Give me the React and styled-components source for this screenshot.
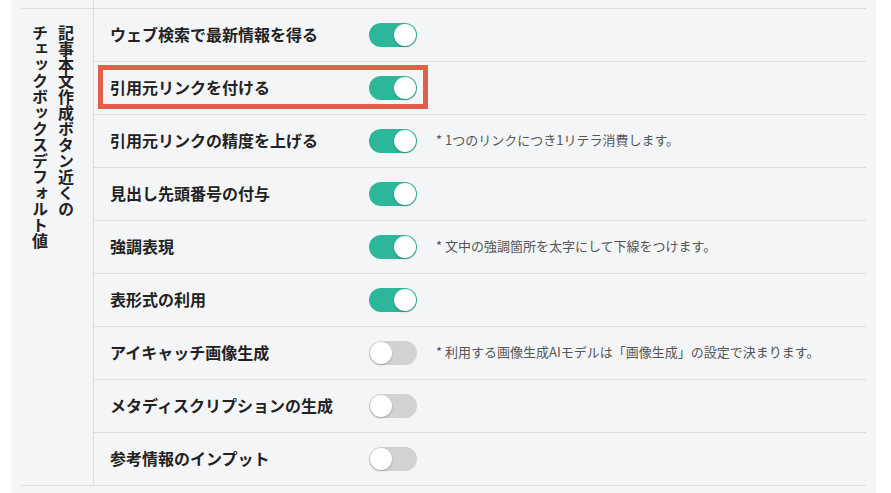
import React from 'react'
import styled, { createGlobalStyle } from 'styled-components'

const GlobalStyle = createGlobalStyle`
  body {
    margin: 0;
    background: #fff;
    font-family: "Noto Sans CJK JP", "Noto Sans", sans-serif;
    color: #222;
  }
`

/** 設定パネル */
const Panel = styled.div`
  margin-left: 11px;
  width: 865px;
  min-height: 493px;
  box-sizing: border-box;
  padding: 0 10px;
  background: #f4f5f7;
`

const Group = styled.div`
  display: grid;
  grid-template-columns: 72px 1fr;
  border-bottom: ${p => (p.$stub ? 'none' : '1px solid #dcdddf')};
  height: ${p => (p.$stub ? '8px' : 'auto')};
  & + & {
    border-top: 1px solid #dcdddf;
  }
`

const HeadCell = styled.div`
  display: flex;
  justify-content: flex-end;
  box-sizing: border-box;
  padding: 16px 14px 0 0;
`

const VerticalText = styled.div`
  writing-mode: vertical-rl;
  font-size: 16px;
  font-weight: bold;
  line-height: 26px;
  color: #222;
`

const Rows = styled.div`
  border-left: 1px solid #dcdddf;
`

const Row = styled.div`
  display: flex;
  align-items: center;
  height: 52px;
  padding-left: 16px;
  & + & {
    border-top: 1px solid #dcdddf;
  }
`

const Field = styled.div`
  position: relative;
  display: flex;
  align-items: center;
  align-self: stretch;
  &::after {
    content: '';
    display: ${p => (p.$highlight ? 'block' : 'none')};
    position: absolute;
    left: -12px;
    right: -11px;
    top: 3px;
    height: 44px;
    box-sizing: border-box;
    border: 5px solid #e35d4b;
  }
`

const Label = styled.span`
  width: 259px;
  margin-top: -3px;
  font-size: 16px;
  line-height: 20px;
  font-weight: bold;
  color: #222;
`

const Track = styled.span`
  position: relative;
  display: inline-block;
  width: 48px;
  height: 24px;
  border-radius: 12px;
  background: ${p => (p.$on ? '#2cb69a' : '#d2d2d2')};
`

const Knob = styled.span`
  position: absolute;
  top: 1px;
  left: ${p => (p.$on ? '25px' : '1px')};
  width: 22px;
  height: 22px;
  border-radius: 50%;
  background: #fff;
  box-shadow: 0 1px 2px rgba(0, 0, 0, 0.25);
`

const Note = styled.span`
  margin-left: 19px;
  margin-top: -3px;
  font-size: 13px;
  line-height: 18px;
  color: #555;
`

const Toggle = ({ on }) => (
  <Track $on={on}>
    <Knob $on={on} />
  </Track>
)

const settings = [
  { label: 'ウェブ検索で最新情報を得る', on: true },
  { label: '引用元リンクを付ける', on: true, highlight: true },
  { label: '引用元リンクの精度を上げる', on: true, note: '* 1つのリンクにつき1リテラ消費します。' },
  { label: '見出し先頭番号の付与', on: true },
  { label: '強調表現', on: true, note: '* 文中の強調箇所を太字にして下線をつけます。' },
  { label: '表形式の利用', on: true },
  { label: 'アイキャッチ画像生成', on: false, note: '* 利用する画像生成AIモデルは「画像生成」の設定で決まります。' },
  { label: 'メタディスクリプションの生成', on: false },
  { label: '参考情報のインプット', on: false },
]

export default function App() {
  return (
    <>
      <GlobalStyle />
      <Panel>
        <Group $stub>
          <div />
          <Rows />
        </Group>
        <Group>
          <HeadCell>
            <VerticalText>
              記事本文作成ボタン近くの<br />チェックボックスデフォルト値
            </VerticalText>
          </HeadCell>
          <Rows>
            {settings.map(item => (
              <Row key={item.label}>
                <Field $highlight={item.highlight}>
                  <Label>{item.label}</Label>
                  <Toggle on={item.on} />
                </Field>
                {item.note && <Note>{item.note}</Note>}
              </Row>
            ))}
          </Rows>
        </Group>
      </Panel>
    </>
  )
}
